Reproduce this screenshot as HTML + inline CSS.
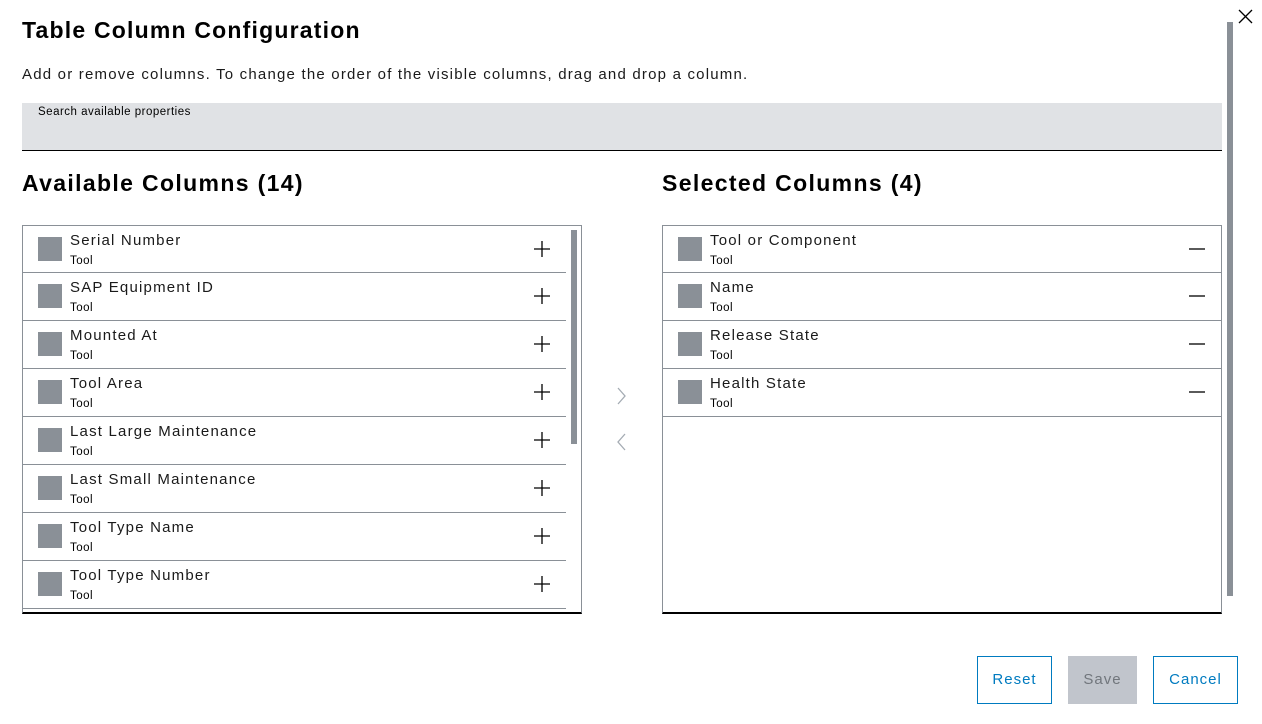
<!DOCTYPE html><html><head><style>
*{margin:0;padding:0;box-sizing:border-box}
body{width:1262px;height:724px;background:#fff;font-family:"Liberation Sans",sans-serif;color:#000;position:relative;overflow:hidden}
.a{position:absolute}
h1{position:absolute;left:22px;top:17px;font-size:23px;font-weight:bold;letter-spacing:1.2px}
h2{position:absolute;font-size:23px;font-weight:bold;top:170px;letter-spacing:1.35px}
.list{position:absolute;top:225px;width:560px;height:389px;border:1px solid #8a9097;border-bottom:2px solid #000;overflow:hidden}
.row{position:relative;height:48px;border-bottom:1px solid #8a9097}
.row:first-child{height:47px}
.sq{position:absolute;left:15px;top:11px;width:24px;height:24px;background:#8a9097}
.t{position:absolute;left:47px;top:6px;font-size:15px;color:#1a1a1a;letter-spacing:1.2px}
.s{position:absolute;left:47px;top:29px;font-size:11.5px;letter-spacing:.5px}
.ic{position:absolute;right:15px;top:14px;width:18px;height:18px}
.btn{position:absolute;top:656px;height:48px;border:1px solid #007bc0;color:#007bc0;font-size:15px;text-align:center;line-height:46px;letter-spacing:1px}
</style></head><body>
<h1>Table Column Configuration</h1>
<div class="a" style="left:22px;top:66px;font-size:15px;color:#1a1a1a;letter-spacing:1.2px">Add or remove columns. To change the order of the visible columns, drag and drop a column.</div>
<div class="a" style="left:22px;top:103px;width:1200px;height:48px;background:#e0e2e5;border-bottom:1px solid #000"><div class="a" style="left:16px;top:3px;font-size:11.5px;letter-spacing:.5px">Search available properties</div></div>
<h2 style="left:22px">Available Columns (14)</h2>
<h2 style="left:662px">Selected Columns (4)</h2>
<div class="list" style="left:22px">
<div style="width:543px">
<div class="row"><div class="sq"></div><div class="t">Serial Number</div><div class="s">Tool</div><svg class="ic" viewBox="0 0 18 18"><path d="M9 1v16M1 9h16" stroke="#000" stroke-width="1.3"/></svg></div>
<div class="row"><div class="sq"></div><div class="t">SAP Equipment ID</div><div class="s">Tool</div><svg class="ic" viewBox="0 0 18 18"><path d="M9 1v16M1 9h16" stroke="#000" stroke-width="1.3"/></svg></div>
<div class="row"><div class="sq"></div><div class="t">Mounted At</div><div class="s">Tool</div><svg class="ic" viewBox="0 0 18 18"><path d="M9 1v16M1 9h16" stroke="#000" stroke-width="1.3"/></svg></div>
<div class="row"><div class="sq"></div><div class="t">Tool Area</div><div class="s">Tool</div><svg class="ic" viewBox="0 0 18 18"><path d="M9 1v16M1 9h16" stroke="#000" stroke-width="1.3"/></svg></div>
<div class="row"><div class="sq"></div><div class="t">Last Large Maintenance</div><div class="s">Tool</div><svg class="ic" viewBox="0 0 18 18"><path d="M9 1v16M1 9h16" stroke="#000" stroke-width="1.3"/></svg></div>
<div class="row"><div class="sq"></div><div class="t">Last Small Maintenance</div><div class="s">Tool</div><svg class="ic" viewBox="0 0 18 18"><path d="M9 1v16M1 9h16" stroke="#000" stroke-width="1.3"/></svg></div>
<div class="row"><div class="sq"></div><div class="t">Tool Type Name</div><div class="s">Tool</div><svg class="ic" viewBox="0 0 18 18"><path d="M9 1v16M1 9h16" stroke="#000" stroke-width="1.3"/></svg></div>
<div class="row"><div class="sq"></div><div class="t">Tool Type Number</div><div class="s">Tool</div><svg class="ic" viewBox="0 0 18 18"><path d="M9 1v16M1 9h16" stroke="#000" stroke-width="1.3"/></svg></div>
</div>
<div class="a" style="left:548px;top:4px;width:6px;height:214px;background:#8a9097"></div>
</div>
<svg class="a" style="left:614px;top:386px" width="16" height="66" viewBox="0 0 16 66"><path d="M4 2l7 8-7 8M11 48l-7 8 7 8" fill="none" stroke="#a4abb3" stroke-width="1.3"/></svg>
<div class="list" style="left:662px">
<div class="row"><div class="sq"></div><div class="t">Tool or Component</div><div class="s">Tool</div><svg class="ic" viewBox="0 0 18 18"><path d="M1 9h16" stroke="#000" stroke-width="1.3"/></svg></div>
<div class="row"><div class="sq"></div><div class="t">Name</div><div class="s">Tool</div><svg class="ic" viewBox="0 0 18 18"><path d="M1 9h16" stroke="#000" stroke-width="1.3"/></svg></div>
<div class="row"><div class="sq"></div><div class="t">Release State</div><div class="s">Tool</div><svg class="ic" viewBox="0 0 18 18"><path d="M1 9h16" stroke="#000" stroke-width="1.3"/></svg></div>
<div class="row"><div class="sq"></div><div class="t">Health State</div><div class="s">Tool</div><svg class="ic" viewBox="0 0 18 18"><path d="M1 9h16" stroke="#000" stroke-width="1.3"/></svg></div>
</div>
<div class="a" style="left:1227px;top:22px;width:6px;height:574px;background:#8a9097"></div>
<svg class="a" style="left:1237px;top:8px" width="17" height="17" viewBox="0 0 17 17"><path d="M2 2l13 13M15 2L2 15" stroke="#000" stroke-width="1.3"/></svg>
<div class="btn" style="left:977px;width:75px">Reset</div>
<div class="btn" style="left:1068px;width:69px;background:#c1c5cc;border-color:#c1c5cc;color:#71767c">Save</div>
<div class="btn" style="left:1153px;width:85px">Cancel</div>
</body></html>
